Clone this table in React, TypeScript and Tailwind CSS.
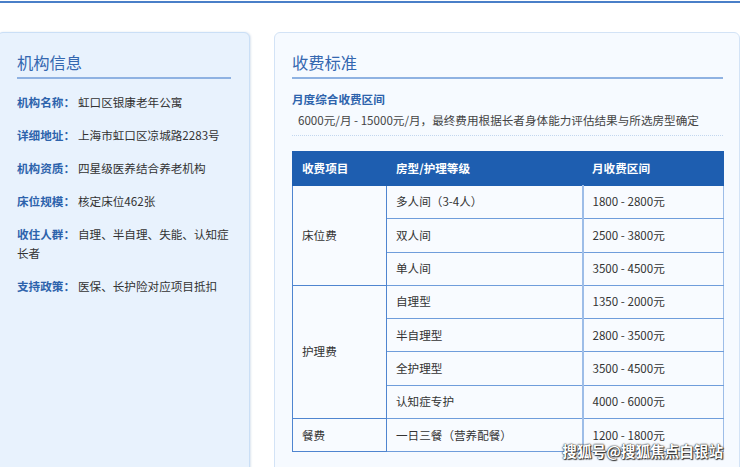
import React from 'react';

const info = [
  { label: '机构名称：', value: '虹口区银康老年公寓' },
  { label: '详细地址：', value: '上海市虹口区凉城路2283号' },
  { label: '机构资质：', value: '四星级医养结合养老机构' },
  { label: '床位规模：', value: '核定床位462张' },
  { label: '收住人群：', value: '自理、半自理、失能、认知症长者' },
  { label: '支持政策：', value: '医保、长护险对应项目抵扣' },
];

const groups = [
  {
    name: '床位费',
    rows: [
      ['多人间（3-4人）', '1800 - 2800元'],
      ['双人间', '2500 - 3800元'],
      ['单人间', '3500 - 4500元'],
    ],
  },
  {
    name: '护理费',
    rows: [
      ['自理型', '1350 - 2000元'],
      ['半自理型', '2800 - 3500元'],
      ['全护理型', '3500 - 4500元'],
      ['认知症专护', '4000 - 6000元'],
    ],
  },
  {
    name: '餐费',
    rows: [['一日三餐（营养配餐）', '1200 - 1800元']],
  },
];

export default function App() {
  return (
    <div
      className="relative h-[467px] w-[740px] overflow-hidden bg-white text-[#333]"
      style={{ fontFamily: '"Noto Sans CJK SC", "Noto Sans", sans-serif' }}
    >
      <div className="mt-px h-[2px] bg-[#4a7fc8]" />

      <div className="mt-[29px] flex gap-[24px]">
        {/* 机构信息 */}
        <div className="ml-[-3px] h-[460px] w-[253px] shrink-0 rounded-md border border-[#cadff6] bg-[#e8f2fd] pl-[19px] pr-[18px] pt-[17px] shadow-[1px_0_2px_rgba(120,150,190,0.25)]">
          <h2 className="border-b-2 border-[#8fb2e2] pb-[3px] text-[16.3px] leading-[24px] text-[#3467b0]">
            机构信息
          </h2>
          <div className="mt-[14px]">
            {info.map((item) => (
              <p key={item.label} className="mb-[14px] text-[11.6px] leading-[19px]">
                <span className="mr-[3px] font-bold text-[#2d63ac]">{item.label}</span>
                <span className="text-[#333]">{item.value}</span>
              </p>
            ))}
          </div>
        </div>

        {/* 收费标准 */}
        <div className="h-[460px] w-[466px] shrink-0 rounded-md border border-[#d3e3f6] bg-[#f6faff] pl-[17px] pr-[16px] pt-[17px]">
          <h2 className="border-b-2 border-[#8fb2e2] pb-[3px] text-[16.3px] leading-[24px] text-[#3467b0]">
            收费标准
          </h2>
          <div className="mt-[11px] border-b border-dotted border-[#c3d7ef] pb-[5px]">
            <p className="text-[11.6px] font-bold leading-[19px] text-[#2d63ac]">月度综合收费区间</p>
            <p className="mt-[2px] pl-[6px] text-[11.6px] leading-[19px] text-[#444]">
              6000元/月 - 15000元/月，最终费用根据长者身体能力评估结果与所选房型确定
            </p>
          </div>

          <table className="mt-[15px] w-[431px] table-fixed border-collapse text-[11.6px]">
            <colgroup>
              <col className="w-[94px]" />
              <col className="w-[196px]" />
              <col className="w-[141px]" />
            </colgroup>
            <thead>
              <tr className="h-[34px] bg-[#1e5eb0] text-left font-bold text-white">
                <th className="border border-[#1e5eb0] pl-[9px]">收费项目</th>
                <th className="border border-[#1e5eb0] pl-[9px]">房型/护理等级</th>
                <th className="border border-[#1e5eb0] pl-[9px]">月收费区间</th>
              </tr>
            </thead>
            <tbody className="bg-[#f8fbff]">
              {groups.map((g) =>
                g.rows.map((r, i) => (
                  <tr key={g.name + r[0]} className="h-[33.3px]">
                    {i === 0 && (
                      <td rowSpan={g.rows.length} className="border border-[#4f85d0] pl-[9px]">
                        {g.name}
                      </td>
                    )}
                    <td className="border border-[#6f9ddb] border-l-[#4f85d0] pl-[9px]">{r[0]}</td>
                    <td className="border border-[#6f9ddb] border-l-2 border-l-[#9dbde8] border-r-[#9dbde8] pl-[9px]">
                      {r[1]}
                    </td>
                  </tr>
                ))
              )}
            </tbody>
          </table>
        </div>
      </div>

      {/* watermark */}
      <div className="absolute right-[17px] top-[441px] text-[14.6px] font-bold leading-[20px] text-white [text-shadow:0_0_1px_#222,0_0_2px_#333,1px_1px_1px_#333]">
        搜狐号@搜狐焦点白银站
      </div>
    </div>
  );
}
